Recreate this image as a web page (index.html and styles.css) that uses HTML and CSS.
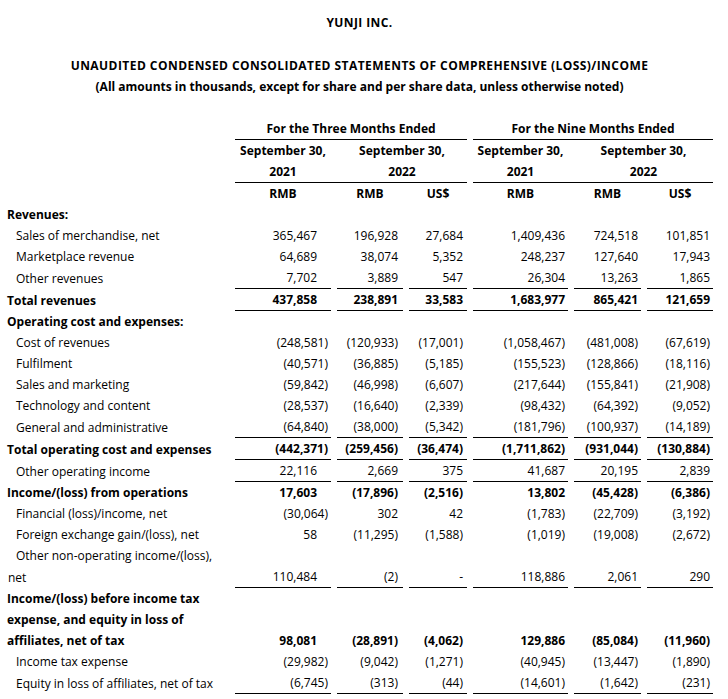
FILE: index.html
```html
<!DOCTYPE html>
<html>
<head>
<meta charset="utf-8">
<link rel="stylesheet" href="styles.css">
</head>
<body>
<div class="page">
  <div class="head">
    <div class="company">YUNJI INC.</div>
    <div class="title">UNAUDITED CONDENSED CONSOLIDATED STATEMENTS OF COMPREHENSIVE (LOSS)/INCOME</div>
    <div class="subtitle">(All amounts in thousands, except for share and per share data, unless otherwise noted)</div>
  </div>
  <table class="fin">
    <colgroup>
      <col class="c-label"><col class="c1"><col class="c2"><col class="c3"><col class="c4"><col class="c5"><col class="c6">
    </colgroup>
    <thead>
      <tr>
        <th></th>
        <th colspan="3" class="period">For the Three Months Ended</th>
        <th colspan="3" class="period">For the Nine Months Ended</th>
      </tr>
      <tr>
        <th></th>
        <th colspan="3" class="dates"><div class="dgrid d3"><span>September 30,</span><span>September 30,</span></div></th>
        <th colspan="3" class="dates"><div class="dgrid d9"><span>September 30,</span><span>September 30,</span></div></th>
      </tr>
      <tr>
        <th></th>
        <th colspan="3" class="years"><div class="dgrid d3"><span>2021</span><span>2022</span></div></th>
        <th colspan="3" class="years"><div class="dgrid d9"><span>2021</span><span>2022</span></div></th>
      </tr>
      <tr class="cur">
        <th></th><th>RMB</th><th>RMB</th><th>US$</th><th>RMB</th><th>RMB</th><th>US$</th>
      </tr>
    </thead>
    <tbody>
      <tr class="bold"><td class="lbl">Revenues:</td><td></td><td></td><td></td><td></td><td></td><td></td></tr>
      <tr><td class="lbl ind">Sales of merchandise, net</td><td class="n p">365,467</td><td class="n">196,928</td><td class="n">27,684</td><td class="n">1,409,436</td><td class="n">724,518</td><td class="n">101,851</td></tr>
      <tr><td class="lbl ind">Marketplace revenue</td><td class="n p">64,689</td><td class="n">38,074</td><td class="n">5,352</td><td class="n">248,237</td><td class="n">127,640</td><td class="n">17,943</td></tr>
      <tr class="ul"><td class="lbl ind">Other revenues</td><td class="n p">7,702</td><td class="n">3,889</td><td class="n">547</td><td class="n">26,304</td><td class="n">13,263</td><td class="n">1,865</td></tr>
      <tr class="bold ul"><td class="lbl">Total revenues</td><td class="n p">437,858</td><td class="n">238,891</td><td class="n">33,583</td><td class="n">1,683,977</td><td class="n">865,421</td><td class="n">121,659</td></tr>
      <tr class="bold"><td class="lbl">Operating cost and expenses:</td><td></td><td></td><td></td><td></td><td></td><td></td></tr>
      <tr><td class="lbl ind">Cost of revenues</td><td class="n">(248,581)</td><td class="n">(120,933)</td><td class="n">(17,001)</td><td class="n">(1,058,467)</td><td class="n">(481,008)</td><td class="n">(67,619)</td></tr>
      <tr><td class="lbl ind">Fulfilment</td><td class="n">(40,571)</td><td class="n">(36,885)</td><td class="n">(5,185)</td><td class="n">(155,523)</td><td class="n">(128,866)</td><td class="n">(18,116)</td></tr>
      <tr><td class="lbl ind">Sales and marketing</td><td class="n">(59,842)</td><td class="n">(46,998)</td><td class="n">(6,607)</td><td class="n">(217,644)</td><td class="n">(155,841)</td><td class="n">(21,908)</td></tr>
      <tr><td class="lbl ind">Technology and content</td><td class="n">(28,537)</td><td class="n">(16,640)</td><td class="n">(2,339)</td><td class="n">(98,432)</td><td class="n">(64,392)</td><td class="n">(9,052)</td></tr>
      <tr class="ul"><td class="lbl ind">General and administrative</td><td class="n">(64,840)</td><td class="n">(38,000)</td><td class="n">(5,342)</td><td class="n">(181,796)</td><td class="n">(100,937)</td><td class="n">(14,189)</td></tr>
      <tr class="bold ul"><td class="lbl">Total operating cost and expenses</td><td class="n">(442,371)</td><td class="n">(259,456)</td><td class="n">(36,474)</td><td class="n">(1,711,862)</td><td class="n">(931,044)</td><td class="n">(130,884)</td></tr>
      <tr class="ul"><td class="lbl ind">Other operating income</td><td class="n p">22,116</td><td class="n">2,669</td><td class="n">375</td><td class="n">41,687</td><td class="n">20,195</td><td class="n">2,839</td></tr>
      <tr class="bold"><td class="lbl">Income/(loss) from operations</td><td class="n p">17,603</td><td class="n">(17,896)</td><td class="n">(2,516)</td><td class="n">13,802</td><td class="n">(45,428)</td><td class="n">(6,386)</td></tr>
      <tr><td class="lbl ind">Financial (loss)/income, net</td><td class="n">(30,064)</td><td class="n">302</td><td class="n">42</td><td class="n">(1,783)</td><td class="n">(22,709)</td><td class="n">(3,192)</td></tr>
      <tr><td class="lbl ind">Foreign exchange gain/(loss), net</td><td class="n p">58</td><td class="n">(11,295)</td><td class="n">(1,588)</td><td class="n">(1,019)</td><td class="n">(19,008)</td><td class="n">(2,672)</td></tr>
      <tr><td class="lbl ind">Other non-operating income/(loss),</td><td></td><td></td><td></td><td></td><td></td><td></td></tr>
      <tr class="ul"><td class="lbl cont">net</td><td class="n p">110,484</td><td class="n">(2)</td><td class="n dash">-</td><td class="n">118,886</td><td class="n">2,061</td><td class="n">290</td></tr>
      <tr class="bold"><td class="lbl">Income/(loss) before income tax</td><td></td><td></td><td></td><td></td><td></td><td></td></tr>
      <tr class="bold"><td class="lbl">expense, and equity in loss of</td><td></td><td></td><td></td><td></td><td></td><td></td></tr>
      <tr class="bold"><td class="lbl">affiliates, net of tax</td><td class="n p">98,081</td><td class="n">(28,891)</td><td class="n">(4,062)</td><td class="n">129,886</td><td class="n">(85,084)</td><td class="n">(11,960)</td></tr>
      <tr><td class="lbl ind">Income tax expense</td><td class="n">(29,982)</td><td class="n">(9,042)</td><td class="n">(1,271)</td><td class="n">(40,945)</td><td class="n">(13,447)</td><td class="n">(1,890)</td></tr>
      <tr class="ul"><td class="lbl ind">Equity in loss of affiliates, net of tax</td><td class="n">(6,745)</td><td class="n">(313)</td><td class="n">(44)</td><td class="n">(14,601)</td><td class="n">(1,642)</td><td class="n">(231)</td></tr>
      <tr class="bold"><td class="lbl">Net income/(loss) and</td><td></td><td></td><td></td><td></td><td></td><td></td></tr>
    </tbody>
  </table>
</div>
</body>
</html>
```
FILE: styles.css
```css
html, body {
  margin: 0;
  padding: 0;
  background: #fff;
}
body {
  font-family: "Open Sans", "Noto Sans", "Liberation Sans", sans-serif;
  font-size: 12px;
  color: #000;
  overflow: hidden;
}
.page {
  width: 719px;
  padding-top: 12px;
}
.head {
  text-align: center;
  font-weight: 700;
  line-height: 21px;
  padding-bottom: 21px;
}
.company {
  margin-bottom: 22px;
  letter-spacing: 0.4px;
}
.title {
  letter-spacing: 0.45px;
}
.fin {
  width: 719px;
  table-layout: fixed;
  border-collapse: separate;
  border-spacing: 6px 0;
  margin: 0;
}
.c-label { width: 223px; }
.c1 { width: 96px; }
.c2 { width: 66px; }
.c3 { width: 58px; }
.c4 { width: 95px; }
.c5 { width: 67px; }
.c6 { width: 66px; }
.fin th, .fin td {
  padding: 0;
  height: 21px;
  line-height: 21px;
  white-space: nowrap;
  font-weight: 400;
  vertical-align: middle;
}
.fin th {
  font-weight: 700;
  text-align: center;
}
.period {
  border-bottom: 1px solid #000;
}
.years {
  border-bottom: 1px solid #000;
}
.dgrid {
  display: grid;
  column-gap: 6px;
  text-align: center;
}
.d3 { grid-template-columns: 96px 1fr; }
.d9 { grid-template-columns: 95px 1fr; }
.bold td { font-weight: 700; }
.lbl {
  text-align: left;
  padding-left: 1px !important;
}
.lbl.ind { padding-left: 10px !important; }
.lbl.cont { padding-left: 2px !important; }
.n {
  text-align: right;
}
.fin td:nth-child(2) { padding-right: 3px; }
.fin td:nth-child(2).p { padding-right: 14px; }
.fin td:nth-child(3) { padding-right: 5px; }
.fin td:nth-child(4) { padding-right: 4px; }
.fin td:nth-child(5) { padding-right: 3px; }
.fin td:nth-child(6) { padding-right: 3px; }
.fin td:nth-child(7) { padding-right: 3px; }
.ul td:nth-child(n+2) {
  border-bottom: 1px solid #000;
}
```
